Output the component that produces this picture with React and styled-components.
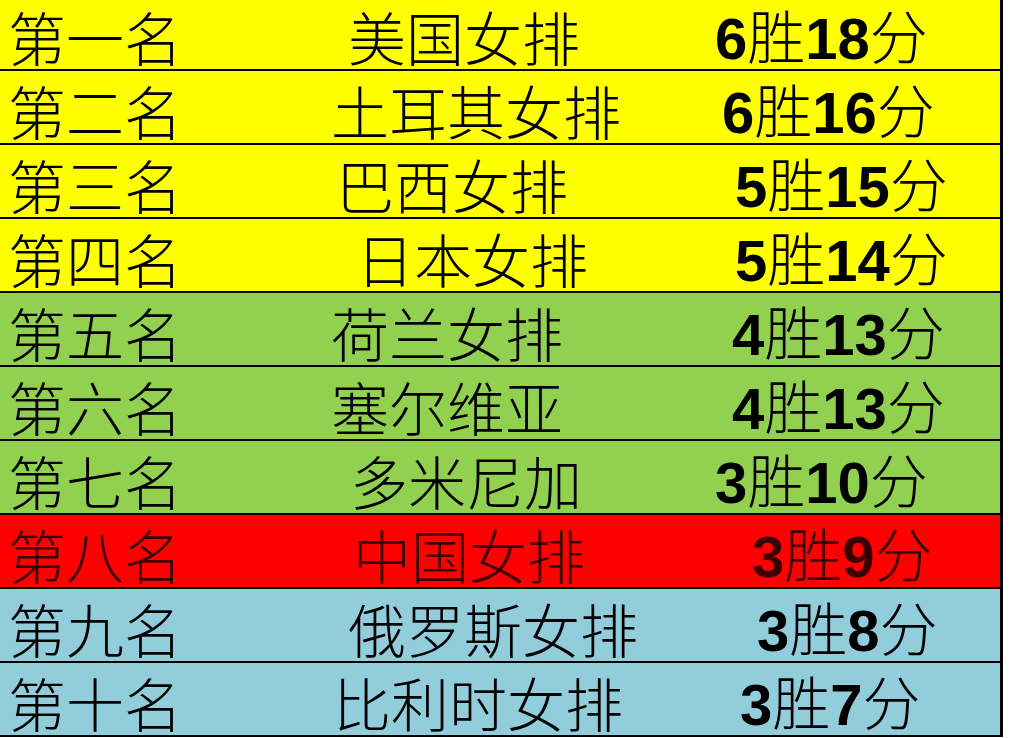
import React from "react";
import styled, { createGlobalStyle } from "styled-components";

const GlobalStyle = createGlobalStyle`
  html, body {
    margin: 0;
    padding: 0;
    background: #fff;
    overflow: hidden;
  }
  body {
    font-family: "Liberation Sans", "Noto Sans CJK SC", sans-serif;
  }
`;

const rowColors = {
  yellow: "#ffff00",
  green: "#92d050",
  red: "#ff0000",
  blue: "#92cddc",
};

const Table = styled.div`
  width: 1003px;
  margin-top: -3px;
  border-right: 3px solid #000;
  box-sizing: border-box;
`;

const Row = styled.div`
  display: flex;
  align-items: center;
  height: 74px;
  padding-top: 6px;
  box-sizing: border-box;
  border-bottom: 2px solid #000;
  background: ${(p) => rowColors[p.$tone]};
  color: ${(p) => (p.$tone === "red" ? "#3a0000" : "#000")};
  font-size: 58px;
  line-height: 1;
  white-space: nowrap;
`;

const Cell = styled.div`
  width: ${(p) => p.$width}px;
  padding-left: ${(p) => p.$indent}px;
  box-sizing: border-box;
  font-family: "Noto Sans CJK SC", sans-serif;
  font-weight: 300;
`;

const Score = styled.div`
  flex: 1;
  padding-left: ${(p) => p.$indent}px;
  box-sizing: border-box;
  font-family: "Noto Sans CJK SC", sans-serif;
  font-weight: 300;
`;

const Num = styled.span`
  font-family: "Liberation Sans", sans-serif;
  font-weight: 700;
`;

const rows = [
  { rank: "第一名", team: "美国女排", win: 6, pts: 18, tone: "yellow", ti: 48, si: 35 },
  { rank: "第二名", team: "土耳其女排", win: 6, pts: 16, tone: "yellow", ti: 31, si: 42 },
  { rank: "第三名", team: "巴西女排", win: 5, pts: 15, tone: "yellow", ti: 36, si: 55 },
  { rank: "第四名", team: "日本女排", win: 5, pts: 14, tone: "yellow", ti: 56, si: 55 },
  { rank: "第五名", team: "荷兰女排", win: 4, pts: 13, tone: "green", ti: 31, si: 52 },
  { rank: "第六名", team: "塞尔维亚", win: 4, pts: 13, tone: "green", ti: 31, si: 52 },
  { rank: "第七名", team: "多米尼加", win: 3, pts: 10, tone: "green", ti: 50, si: 35 },
  { rank: "第八名", team: "中国女排", win: 3, pts: 9, tone: "red", ti: 53, si: 72 },
  { rank: "第九名", team: "俄罗斯女排", win: 3, pts: 8, tone: "blue", ti: 48, si: 77 },
  { rank: "第十名", team: "比利时女排", win: 3, pts: 7, tone: "blue", ti: 33, si: 60 },
];

export default function App() {
  return (
    <>
      <GlobalStyle />
      <Table>
        {rows.map((r) => (
          <Row key={r.rank} $tone={r.tone}>
            <Cell $width={300} $indent={8}>{r.rank}</Cell>
            <Cell $width={380} $indent={r.ti}>{r.team}</Cell>
            <Score $indent={r.si}>
              <Num>{r.win}</Num>胜<Num>{r.pts}</Num>分
            </Score>
          </Row>
        ))}
      </Table>
    </>
  );
}
